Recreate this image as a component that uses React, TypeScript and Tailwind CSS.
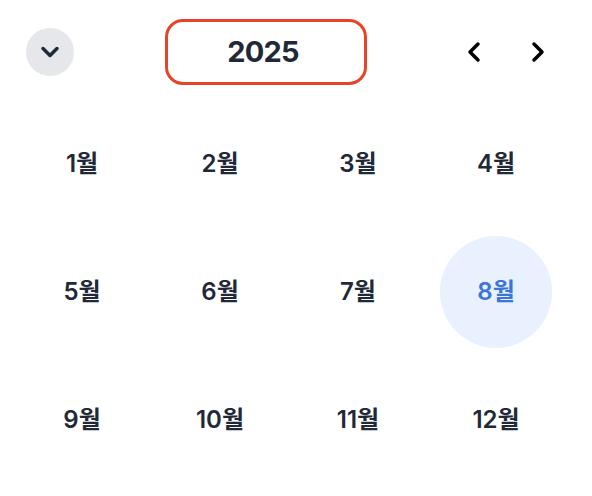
import { ChevronDown, ChevronLeft, ChevronRight } from "lucide-react"

const months = ["1월", "2월", "3월", "4월", "5월", "6월", "7월", "8월", "9월", "10월", "11월", "12월"]

export default function App() {
    const selected = 7

    return (
        <div
            className="w-[592px] h-[496px] bg-white text-[#1f2937]"
            style={{ fontFamily: "Inter, 'Noto Sans CJK KR', sans-serif" }}
        >
            {/* Header */}
            <div className="h-[104px] flex items-center pl-[26px]">
                <button className="w-12 h-12 rounded-full bg-[#e5e7eb] flex items-center justify-center">
                    <ChevronDown className="w-7 h-7 text-[#1f2937]" strokeWidth={3} />
                </button>
                <div className="ml-[91px] w-[202px] h-[66px] rounded-[18px] border-[3px] border-[#ea4228] flex items-center justify-center pr-[6px]">
                    <span className="text-[29px] font-bold tracking-tight">2025</span>
                </div>
                <div className="ml-[91px] flex items-center gap-[32px]">
                    <ChevronLeft className="w-8 h-8 text-black" strokeWidth={2.6} />
                    <ChevronRight className="w-8 h-8 text-black" strokeWidth={2.6} />
                </div>
            </div>

            {/* Months */}
            <div className="grid grid-cols-4 w-[552px] ml-[13px] -mt-[4px]">
                {months.map((m, i) => (
                    <div key={m} className="h-[128px] flex items-center justify-center">
                        {i === selected ? (
                            <div className="w-[112px] h-[112px] rounded-full bg-[#e8f1fd] flex items-center justify-center">
                                <span className="text-[24px] font-semibold text-[#3b74da]">{m}</span>
                            </div>
                        ) : (
                            <span className="text-[24px] font-semibold">{m}</span>
                        )}
                    </div>
                ))}
            </div>
        </div>
    )
}
